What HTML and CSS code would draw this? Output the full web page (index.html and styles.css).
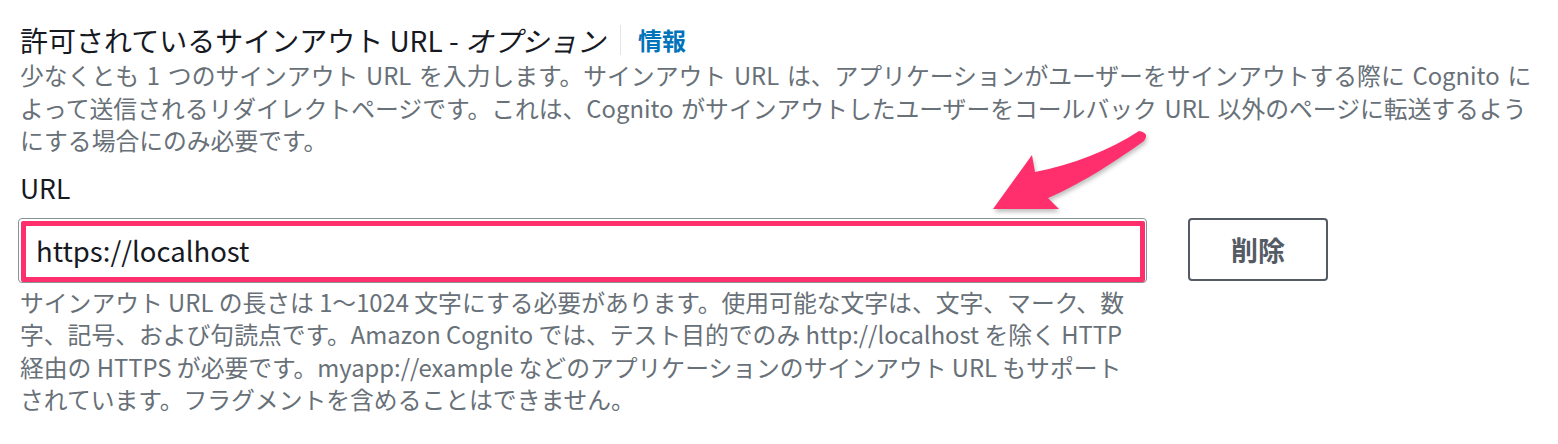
FILE: index.html
```html
<!DOCTYPE html>
<html lang="ja">
<head>
<meta charset="utf-8">
<link rel="stylesheet" href="styles.css">
</head>
<body>
<div class="page">
  <div class="header">
    <h2 class="title">許可されているサインアウト URL - <i>オプション</i></h2>
    <span class="sep"></span>
    <a class="info">情報</a>
  </div>
  <p class="desc">少なくとも 1 つのサインアウト URL を入力します。サインアウト URL は、アプリケーションがユーザーをサインアウトする際に Cognito によって送信されるリダイレクトページです。これは、Cognito がサインアウトしたユーザーをコールバック URL 以外のページに転送するようにする場合にのみ必要です。</p>
  <div class="label">URL</div>
  <div class="row">
    <div class="field">
      <div class="input">https://localhost</div>
      <div class="highlight"></div>
      <p class="help">サインアウト URL の長さは 1〜1024 文字にする必要があります。使用可能な文字は、文字、マーク、数字、記号、および句読点です。Amazon Cognito では、テスト目的でのみ http://localhost を除く HTTP 経由の HTTPS が必要です。myapp://example などのアプリケーションのサインアウト URL もサポートされています。フラグメントを含めることはできません。</p>
    </div>
    <button class="btn">削除</button>
  </div>
  <svg class="arrow" width="180" height="110" viewBox="0 0 180 110">
    <path d="M159 11 C 130 30, 92 45, 55 52 L 52 35 L 13 89 L 79 89 L 68 78 C 105 62, 140 38, 164 21 Q 170 13 159 11 Z" fill="#ff2f6d"/>
  </svg>
</div>
</body>
</html>
```
FILE: styles.css
```css
html, body {
  margin: 0;
  padding: 0;
  background: #ffffff;
}
body {
  font-family: "Noto Sans CJK JP", "Noto Sans", sans-serif;
  color: #16191f;
}
.page {
  position: relative;
  padding: 23px 20px 0 20px;
}
.header {
  display: flex;
  align-items: center;
  height: 34px;
}
.title {
  margin: 0;
  font-size: 28px;
  font-weight: 400;
  line-height: 34px;
  color: #16191f;
  white-space: nowrap;
}
.title i {
  font-style: italic;
}
.sep {
  width: 1px;
  height: 30px;
  background: #e3e6e6;
  margin: 0 17px 0 15px;
}
.info {
  font-size: 24px;
  font-weight: 700;
  color: #0073bb;
  line-height: 34px;
}
.desc {
  margin: 2px 0 0 0;
  font-size: 23.8px;
  line-height: 32.5px;
  word-spacing: 2.5px;
  color: #687078;
}
.label {
  margin-top: 14px;
  font-size: 26.5px;
  line-height: 34px;
  color: #16191f;
}
.row {
  display: flex;
  align-items: flex-start;
  gap: 41px;
  margin-top: 13px;
  margin-left: -2px;
}
.field {
  position: relative;
  width: 1129px;
}
.input {
  box-sizing: border-box;
  height: 65px;
  border: 1px solid #879596;
  border-radius: 4px;
  padding: 0 17px;
  font-size: 27.5px;
  line-height: 63px;
  color: #16191f;
}
.highlight {
  position: absolute;
  left: 3px;
  top: 3px;
  width: 1124px;
  height: 61px;
  box-sizing: border-box;
  border: 5px solid #ff2f6d;
  border-radius: 2px;
}
.help {
  margin: 3px 0 0 2px;
  font-size: 23.8px;
  line-height: 32.5px;
  color: #687078;
  width: 1115px;
}
.btn {
  box-sizing: border-box;
  width: 140px;
  height: 63px;
  background: #ffffff;
  border: 2px solid #545b64;
  border-radius: 4px;
  font-family: "Noto Sans CJK JP", sans-serif;
  font-size: 27px;
  font-weight: 700;
  color: #545b64;
  padding: 0;
}
.arrow {
  position: absolute;
  left: 980px;
  top: 120px;
  filter: drop-shadow(1px 3px 2px rgba(0,0,0,0.25));
}
```
